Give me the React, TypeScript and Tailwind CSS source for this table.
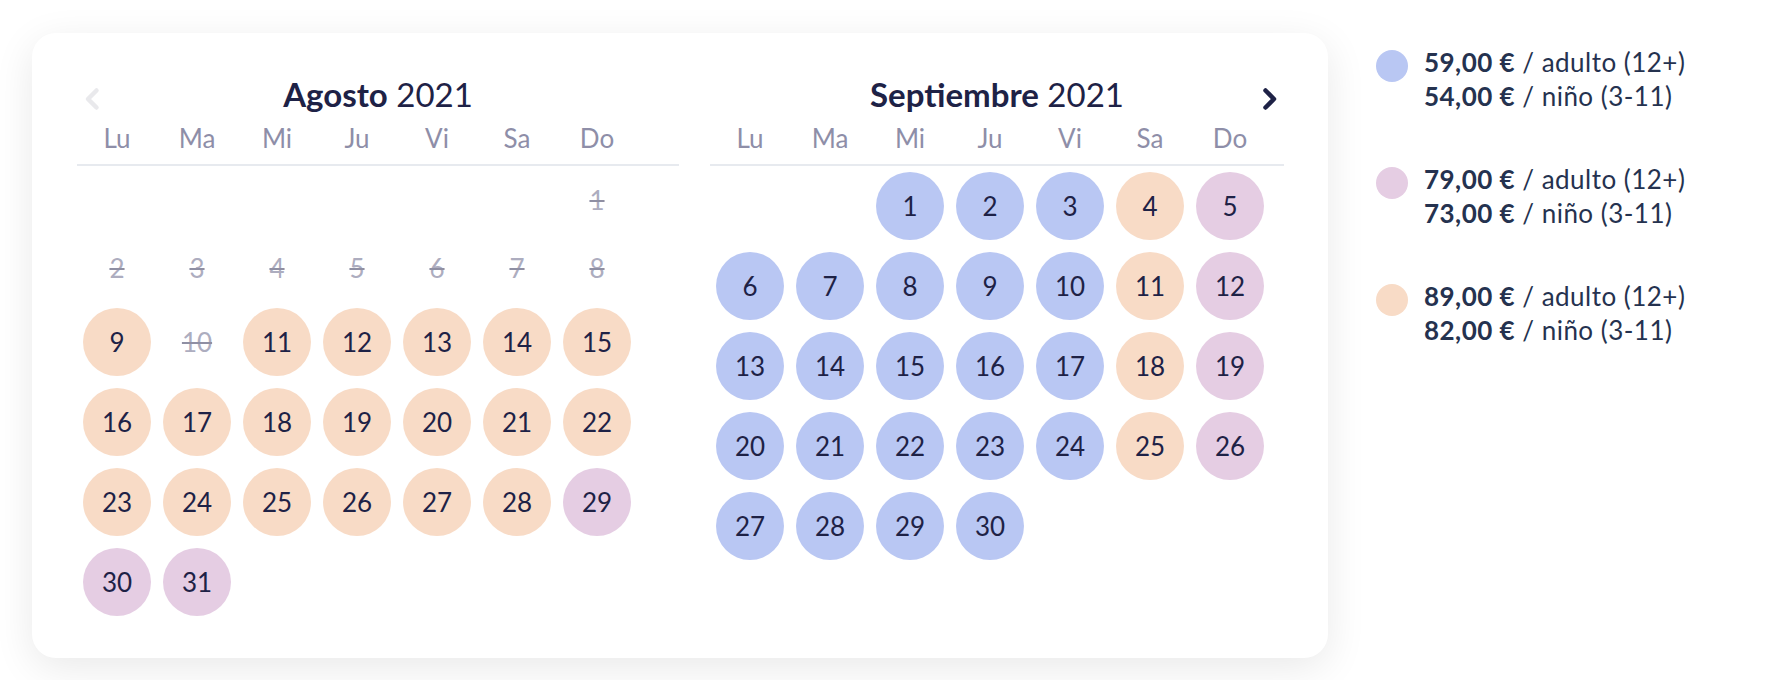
import React from 'react'

type Tone = 'blue' | 'peach' | 'lilac' | 'off' | null

interface Day {
  n: number
  tone: Tone
}

const toneBg: Record<string, string> = {
  blue: 'bg-[#b9c7f3]',
  peach: 'bg-[#f8dbc6]',
  lilac: 'bg-[#e5cde3]',
}

const weekdays = ['Lu', 'Ma', 'Mi', 'Ju', 'Vi', 'Sa', 'Do']

// builds the weeks of a month; offset = empty cells before day 1 (monday first)
function buildWeeks(days: number, offset: number, toneOf: (n: number, col: number) => Tone) {
  const cells: (Day | null)[] = []
  for (let i = 0; i < offset; i++) cells.push(null)
  for (let n = 1; n <= days; n++) {
    const col = (offset + n - 1) % 7
    cells.push({ n, tone: toneOf(n, col) })
  }
  const weeks: (Day | null)[][] = []
  for (let i = 0; i < cells.length; i += 7) weeks.push(cells.slice(i, i + 7))
  return weeks
}

const august = buildWeeks(31, 6, (n) => {
  if (n <= 8 || n === 10) return 'off'
  if (n >= 29) return 'lilac'
  return 'peach'
})

const september = buildWeeks(30, 2, (_n, col) => {
  if (col === 5) return 'peach'
  if (col === 6) return 'lilac'
  return 'blue'
})

function Chevron({ dir, color }: { dir: 'left' | 'right'; color: string }) {
  return (
    <svg width="16" height="24" viewBox="0 0 16 24" fill="none">
      <path
        d={dir === 'left' ? 'M12.5 3.5 L4 12 L12.5 20.5' : 'M3.5 3.5 L12 12 L3.5 20.5'}
        stroke={color}
        strokeWidth="4.5"
        strokeLinecap="round"
        strokeLinejoin="round"
      />
    </svg>
  )
}

function DayCell({ day }: { day: Day | null }) {
  if (!day) return <div className="w-[80px] h-[68px]" />
  if (day.tone === 'off') {
    return (
      <div className="w-[80px] h-[68px] flex items-center justify-center text-[26px] text-[#adadbf] line-through decoration-[#8f8fa3] decoration-2">
        {day.n}
      </div>
    )
  }
  return (
    <div className="w-[80px] h-[80px] flex items-center justify-center">
      <div
        className={`w-[68px] h-[68px] rounded-full flex items-center justify-center text-[26px] text-[#1e2246] ${toneBg[day.tone as string]}`}
      >
        {day.n}
      </div>
    </div>
  )
}

function Month({
  name,
  weeks,
  width,
  prev,
  next,
}: {
  name: string
  weeks: (Day | null)[][]
  width: string
  prev?: boolean
  next?: boolean
}) {
  return (
    <div className={width}>
      {/* Header */}
      <div className="relative h-[40px] flex items-center justify-center">
        {prev && (
          <div className="absolute left-[7px] top-[13px]">
            <Chevron dir="left" color="#e9e9ec" />
          </div>
        )}
        <h2 className="text-[33px] leading-[40px] text-[#1e2246]">
          <span className="font-bold">{name}</span> 2021
        </h2>
        {next && (
          <div className="absolute right-[6px] top-[13px]">
            <Chevron dir="right" color="#1e2246" />
          </div>
        )}
      </div>

      {/* Weekdays */}
      <div className="mt-[8px] pb-[10px] border-b-2 border-[#e7eaef]">
        <div className="flex">
          {weekdays.map((w) => (
            <div key={w} className="w-[80px] text-center text-[26px] leading-[32px] text-[#8e8ea8]">
              {w}
            </div>
          ))}
        </div>
      </div>

      {/* Days */}
      <div className="flex flex-col">
        {weeks.map((week, i) => (
          <div key={i} className="flex items-center">
            {week.map((d, j) => (
              <DayCell key={j} day={d} />
            ))}
          </div>
        ))}
      </div>
    </div>
  )
}

const prices = [
  { color: 'bg-[#b9c7f3]', adult: '59,00 €', child: '54,00 €' },
  { color: 'bg-[#e5cde3]', adult: '79,00 €', child: '73,00 €' },
  { color: 'bg-[#f8dbc6]', adult: '89,00 €', child: '82,00 €' },
]

export default function App() {
  return (
    <div className="w-[1766px] h-[680px] bg-white overflow-hidden font-['Lato','Liberation_Sans',sans-serif]">
      <div className="flex items-start pl-[32px] pt-[33px]">
        {/* Calendar card */}
        <div className="shrink-0 bg-white rounded-[24px] shadow-[0_10px_40px_rgba(0,0,0,0.09)] pt-[41px] pl-[45px] pr-[44px] pb-[36px] flex gap-[31px]">
          <Month name="Agosto" weeks={august} width="w-[602px]" prev />
          <Month name="Septiembre" weeks={september} width="w-[574px]" next />
        </div>

        {/* Legend */}
        <div className="shrink-0 w-[340px] ml-[48px] mt-[12px] flex flex-col gap-[49px]">
          {prices.map((p) => (
            <div key={p.adult} className="flex items-start gap-[16px]">
              <div className={`shrink-0 w-[32px] h-[32px] rounded-full mt-[5px] ${p.color}`} />
              <div className="text-[#25324f] tracking-[0.03em]">
                <p className="text-[26px] leading-[34px] whitespace-nowrap">
                  <span className="font-bold">{p.adult}</span> / adulto (12+)
                </p>
                <p className="text-[26px] leading-[34px] whitespace-nowrap">
                  <span className="font-bold">{p.child}</span> / niño (3-11)
                </p>
              </div>
            </div>
          ))}
        </div>
      </div>
    </div>
  )
}
